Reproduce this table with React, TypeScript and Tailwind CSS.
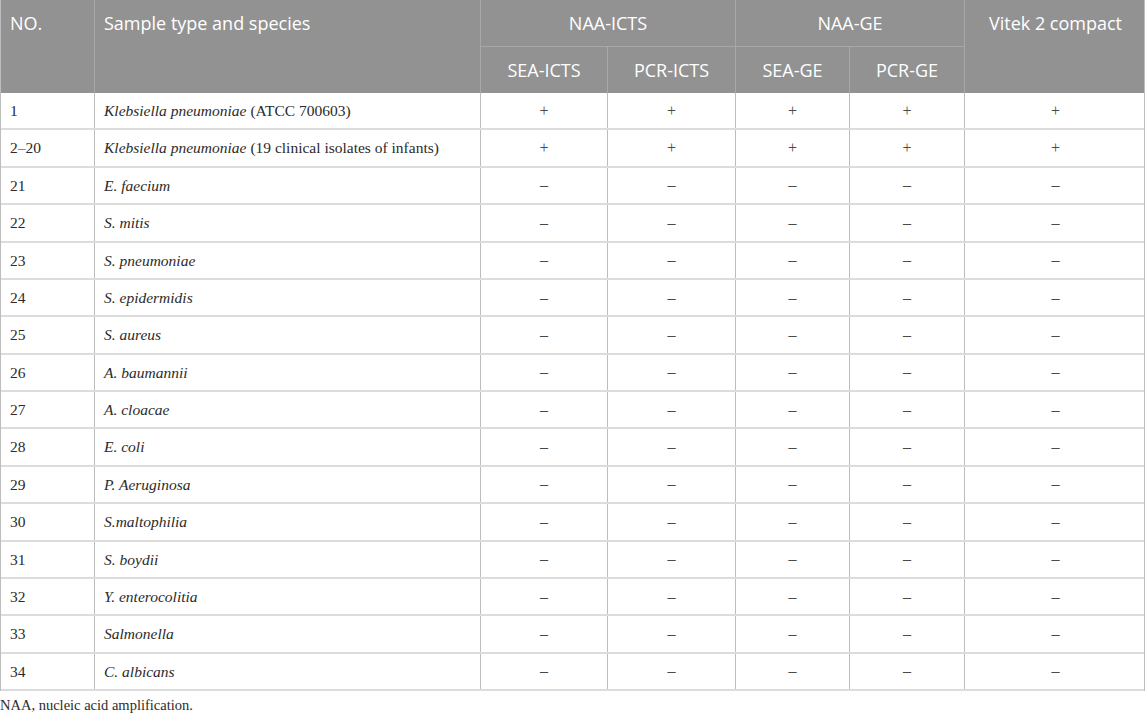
import React from "react";

const rows: { no: string; sp: string; extra?: string; mark: string }[] = [
  { no: "1", sp: "Klebsiella pneumoniae", extra: " (ATCC 700603)", mark: "+" },
  { no: "2–20", sp: "Klebsiella pneumoniae", extra: " (19 clinical isolates of infants)", mark: "+" },
  { no: "21", sp: "E. faecium", mark: "–" },
  { no: "22", sp: "S. mitis", mark: "–" },
  { no: "23", sp: "S. pneumoniae", mark: "–" },
  { no: "24", sp: "S. epidermidis", mark: "–" },
  { no: "25", sp: "S. aureus", mark: "–" },
  { no: "26", sp: "A. baumannii", mark: "–" },
  { no: "27", sp: "A. cloacae", mark: "–" },
  { no: "28", sp: "E. coli", mark: "–" },
  { no: "29", sp: "P. Aeruginosa", mark: "–" },
  { no: "30", sp: "S.maltophilia", mark: "–" },
  { no: "31", sp: "S. boydii", mark: "–" },
  { no: "32", sp: "Y. enterocolitia", mark: "–" },
  { no: "33", sp: "Salmonella", mark: "–" },
  { no: "34", sp: "C. albicans", mark: "–" },
];

const cols = "grid grid-cols-[93px_386px_127px_128px_114px_115px_182px]";

export default function App() {
  return (
    <div className="w-[1145px] h-[716px] bg-white overflow-hidden">
      <div className="border-x border-[#bdbdbd]">
        {/* Header */}
        <div
          className={`${cols} grid-rows-[47px_46px] bg-[#929292] text-white text-[18px] font-['Open_Sans',sans-serif]`}
        >
          <div className="row-span-2 col-start-1 row-start-1 pl-[9px]">
            <div className="h-[47px] flex items-center">NO.</div>
          </div>
          <div className="row-span-2 col-start-2 row-start-1 pl-[9px] border-l border-[#a8a8a8]">
            <div className="h-[47px] flex items-center">Sample type and species</div>
          </div>
          <div className="col-start-3 col-span-2 row-start-1 flex items-center justify-center border-l border-b border-[#a8a8a8]">
            NAA-ICTS
          </div>
          <div className="col-start-5 col-span-2 row-start-1 flex items-center justify-center border-l border-b border-[#a8a8a8]">
            NAA-GE
          </div>
          <div className="col-start-7 row-span-2 row-start-1 border-l border-[#a8a8a8]">
            <div className="h-[47px] flex items-center justify-center">Vitek 2 compact</div>
          </div>
          <div className="col-start-3 row-start-2 flex items-center justify-center border-l border-[#a8a8a8]">
            SEA-ICTS
          </div>
          <div className="col-start-4 row-start-2 flex items-center justify-center border-l border-[#a8a8a8]">
            PCR-ICTS
          </div>
          <div className="col-start-5 row-start-2 flex items-center justify-center border-l border-[#a8a8a8]">
            SEA-GE
          </div>
          <div className="col-start-6 row-start-2 flex items-center justify-center border-l border-[#a8a8a8]">
            PCR-GE
          </div>
        </div>

        {/* Body */}
        <div className="font-['Liberation_Serif',serif] text-[15.5px] text-[#2b2b2b]">
          {rows.map((r) => (
            <div key={r.no} className={`${cols} h-[37.375px] border-b-2 border-[#dcdcdc]`}>
              <div className="flex items-center pl-[9px]">{r.no}</div>
              <div className="flex items-center pl-[9px] border-l border-[#bdbdbd]">
                <span>
                  <i>{r.sp}</i>
                  {r.extra}
                </span>
              </div>
              {[0, 1, 2, 3, 4].map((k) => (
                <div
                  key={k}
                  className="flex items-center justify-center border-l border-[#bdbdbd] text-[#4a4a4a] text-[16px]"
                >
                  {r.mark}
                </div>
              ))}
            </div>
          ))}
        </div>
      </div>
      <div className="font-['Liberation_Serif',serif] text-[14.5px] text-[#2b2b2b] leading-[20px] pt-[4px]">
        NAA, nucleic acid amplification.
      </div>
    </div>
  );
}
